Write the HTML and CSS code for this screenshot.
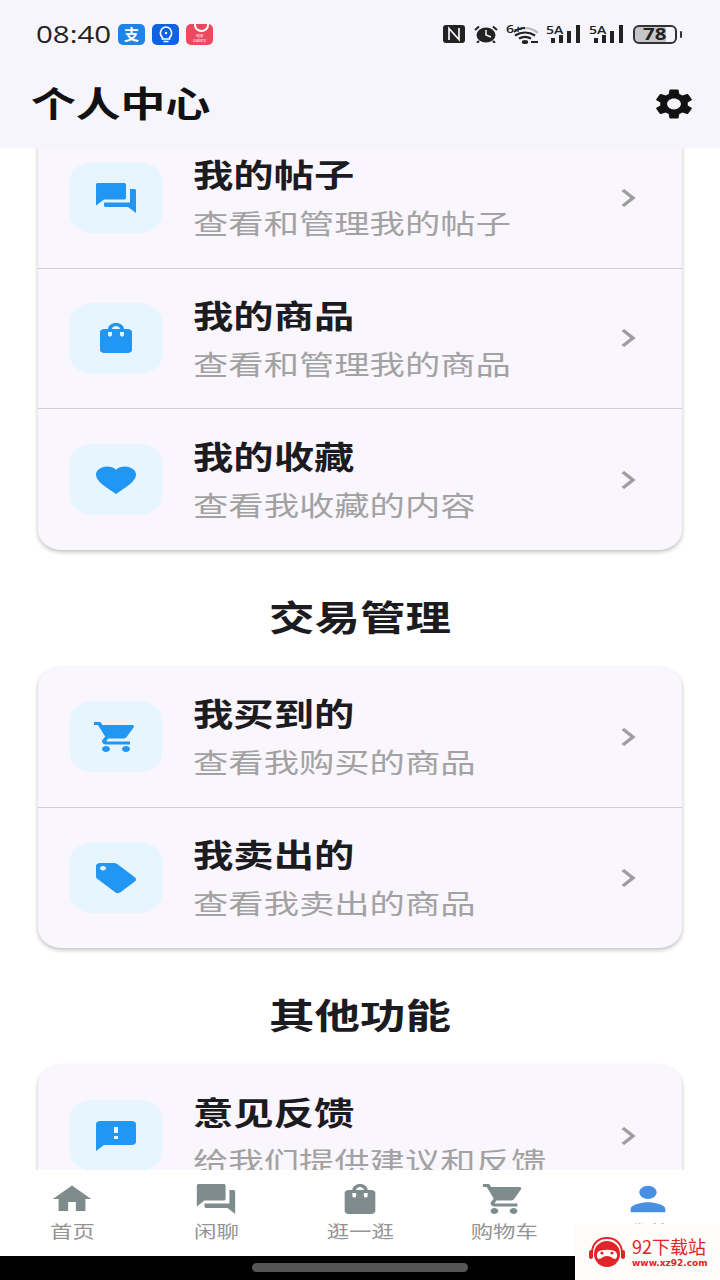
FILE: index.html
```html
<!DOCTYPE html>
<html lang="zh-CN">
<head>
    <meta charset="UTF-8">
    <meta name="viewport" content="width=device-width, initial-scale=1.0">
    <title>个人中心</title>
    <link rel="stylesheet" href="styles.css">
</head>
<body>
    <svg class="sprites" width="0" height="0">
        <symbol id="i-forum" viewBox="0 0 24 24" preserveAspectRatio="none"><path d="M21 6h-2v9H6v2c0 .55.45 1 1 1h11l4 4V7c0-.55-.45-1-1-1zm-4 6V3c0-.55-.45-1-1-1H3c-.55 0-1 .45-1 1v14l4-4h10c.55 0 1-.45 1-1z"/></symbol>
        <symbol id="i-bag" viewBox="0 0 24 24" preserveAspectRatio="none"><path d="M18 6h-2c0-2.21-1.79-4-4-4S8 3.79 8 6H6c-1.1 0-2 .9-2 2v12c0 1.1.9 2 2 2h12c1.1 0 2-.9 2-2V8c0-1.1-.9-2-2-2zm-8 4c0 .55-.45 1-1 1s-1-.45-1-1V8h2v2zm2-6c1.1 0 2 .9 2 2h-4c0-1.1.9-2 2-2zm4 6c0 .55-.45 1-1 1s-1-.45-1-1V8h2v2z"/></symbol>
        <symbol id="i-heart" viewBox="0 0 24 24" preserveAspectRatio="none"><path d="M12 21.35l-1.45-1.32C5.4 15.36 2 12.28 2 8.5 2 5.42 4.42 3 7.5 3c1.74 0 3.41.81 4.5 2.09C13.09 3.81 14.76 3 16.5 3 19.58 3 22 5.42 22 8.5c0 3.78-3.4 6.86-8.55 11.54L12 21.35z"/></symbol>
        <symbol id="i-cart" viewBox="0 0 24 24" preserveAspectRatio="none"><path d="M7 18c-1.1 0-1.99.9-1.99 2S5.9 22 7 22s2-.9 2-2-.9-2-2-2zM1 2v2h2l3.6 7.59-1.35 2.45c-.16.28-.25.61-.25.96 0 1.1.9 2 2 2h12v-2H7.42c-.14 0-.25-.11-.25-.25l.03-.12.9-1.63h7.45c.75 0 1.41-.41 1.75-1.03l3.58-6.49c.08-.14.12-.31.12-.48 0-.55-.45-1-1-1H5.21l-.94-2H1zm16 16c-1.1 0-1.99.9-1.99 2s.89 2 1.99 2 2-.9 2-2-.9-2-2-2z"/></symbol>
        <symbol id="i-tag" viewBox="0 0 24 24" preserveAspectRatio="none"><path d="M21.41 11.58l-9-9C12.05 2.22 11.55 2 11 2H4c-1.1 0-2 .9-2 2v7c0 .55.22 1.05.59 1.42l9 9c.36.36.86.58 1.41.58.55 0 1.05-.22 1.41-.59l7-7c.37-.36.59-.86.59-1.41 0-.55-.23-1.06-.59-1.42zM5.5 7C4.67 7 4 6.33 4 5.5S4.67 4 5.5 4 7 4.67 7 5.5 6.33 7 5.5 7z"/></symbol>
        <symbol id="i-feedback" viewBox="0 0 24 24" preserveAspectRatio="none"><path d="M20 2H4c-1.1 0-1.99.9-1.99 2L2 22l4-4h14c1.1 0 2-.9 2-2V4c0-1.1-.9-2-2-2zm-7 12h-2v-2h2v2zm0-4h-2V6h2v4z"/></symbol>
        <symbol id="i-chevron" viewBox="0 0 24 24" preserveAspectRatio="none"><path d="M10 6L8.59 7.41 13.17 12l-4.58 4.59L10 18l6-6z"/></symbol>
        <symbol id="i-home" viewBox="0 0 24 24" preserveAspectRatio="none"><path d="M10 20v-6h4v6h5v-8h3L12 3 2 12h3v8z"/></symbol>
        <symbol id="i-person" viewBox="0 0 24 24" preserveAspectRatio="none"><path d="M12 12c2.21 0 4-1.79 4-4s-1.79-4-4-4-4 1.79-4 4 1.79 4 4 4zm0 2c-2.67 0-8 1.34-8 4v2h16v-2c0-2.66-5.33-4-8-4z"/></symbol>
        <symbol id="i-gear" viewBox="0 0 24 24" preserveAspectRatio="none"><path d="M19.14 12.94c.04-.3.06-.61.06-.94 0-.32-.02-.64-.07-.94l2.03-1.58c.18-.14.23-.41.12-.61l-1.92-3.32c-.12-.22-.37-.29-.59-.22l-2.39.96c-.5-.38-1.03-.7-1.62-.94l-.36-2.54c-.04-.24-.24-.41-.48-.41h-3.84c-.24 0-.43.17-.47.41l-.36 2.54c-.59.24-1.13.57-1.62.94l-2.39-.96c-.22-.08-.47 0-.59.22L2.74 8.87c-.12.21-.08.47.12.61l2.03 1.58c-.05.3-.09.63-.09.94s.02.64.07.94l-2.03 1.58c-.18.14-.23.41-.12.61l1.92 3.32c.12.22.37.29.59.22l2.39-.96c.5.38 1.03.7 1.62.94l.36 2.54c.05.24.24.41.48.41h3.84c.24 0 .44-.17.47-.41l.36-2.54c.59-.24 1.13-.56 1.62-.94l2.39.96c.22.08.47 0 .59-.22l1.92-3.32c.12-.22.07-.47-.12-.61l-2.01-1.58zM12 15.6c-1.98 0-3.6-1.62-3.6-3.6s1.62-3.6 3.6-3.6 3.6 1.62 3.6 3.6-1.62 3.6-3.6 3.6z"/></symbol>
    </svg>

    <header class="top">
        <div class="status-bar">
            <div class="status-left">
                <span class="clock"><span class="wide">08:40</span></span>
                <span class="app-tile alipay">支</span>
                <span class="app-tile bulb">
                    <svg viewBox="0 0 26 20" width="26" height="20"><path d="M13 3a6 6 0 0 0-3.6 10.4V15h7.2v-1.6A6 6 0 0 0 13 3z" fill="none" stroke="#fff" stroke-width="1.6"/><path d="M10.5 17.5h5" stroke="#fff" stroke-width="1.6"/><circle cx="13" cy="9" r="1.2" fill="#fff"/></svg>
                </span>
                <span class="app-tile gallery"><span class="gallery-text">App<br>Gallery</span></span>
            </div>
            <div class="status-right">
                <svg class="st-nfc" viewBox="0 0 22 18" width="22" height="18">
                    <rect width="22" height="18" rx="3" fill="#222"/>
                    <path d="M6 15V3.500l10 11V3" fill="none" stroke="#f5f5fb" stroke-width="1.700"/>
                </svg>
                <svg class="st-alarm" viewBox="0 0 24 18" width="24" height="18">
                    <ellipse cx="12" cy="10" rx="9.500" ry="7.600" fill="#222"/>
                    <path d="M12 5v5l5 2" fill="none" stroke="#f5f5fb" stroke-width="1.500"/>
                    <path d="M1 5l4-3.500M23 5l-4-3.500M5 16l-2 2M19 16l2 2" stroke="#222" stroke-width="2"/>
                </svg>
                <span class="st-wifi">
                    <span class="st-small"><span class="wide">6+</span></span>
                    <svg viewBox="0 0 32 20" width="32" height="20">
                        <path d="M8 8C11 5.500 15 4 19 4" fill="none" stroke="#222" stroke-width="2.200"/>
                        <path d="M19 4c5 0 9 1.500 13 5" fill="none" stroke="#bbb" stroke-width="2.200"/>
                        <path d="M9 11.500c6-4 14-4 20 0" fill="none" stroke="#222" stroke-width="2.200"/>
                        <path d="M13 14.500c3.500-2 8.500-2 12 0" fill="none" stroke="#222" stroke-width="2.200"/>
                        <ellipse cx="19" cy="18" rx="3.200" ry="2" fill="#222"/>
                        <path d="M25 18h7" stroke="#222" stroke-width="2"/>
                    </svg>
                </span>
                <span class="st-signal">
                    <span class="st-small"><span class="wide">5A</span></span>
                    <svg viewBox="0 0 35 18" width="35" height="18"><path d="M5 13h4v5H5zM13 10h4v8h-4zM21 6h4v12h-4zM30 0h4v18h-4z" fill="#222"/></svg>
                </span>
                <span class="st-signal">
                    <span class="st-small"><span class="wide">5A</span></span>
                    <svg viewBox="0 0 35 18" width="35" height="18"><path d="M5 13h4v5H5zM13 10h4v8h-4zM21 6h4v12h-4zM30 0h4v18h-4z" fill="#222"/></svg>
                </span>
                <span class="battery"><span class="wide">78</span></span>
                <span class="battery-nub"></span>
            </div>
        </div>
        <div class="app-bar">
            <h1 class="page-title"><span class="wide">个人中心</span></h1>
            <svg class="gear"><use href="#i-gear"/></svg>
        </div>
    </header>

    <main class="content">
        <div class="scroll">
            <section class="card">
                <div class="row">
                    <div class="tile"><svg class="ico"><use href="#i-forum"/></svg></div>
                    <div class="row-text">
                        <div class="row-title"><span class="wide">我的帖子</span></div>
                        <div class="row-sub"><span class="wide">查看和管理我的帖子</span></div>
                    </div>
                    <svg class="chevron"><use href="#i-chevron"/></svg>
                </div>
                <div class="row">
                    <div class="tile"><svg class="ico"><use href="#i-bag"/></svg></div>
                    <div class="row-text">
                        <div class="row-title"><span class="wide">我的商品</span></div>
                        <div class="row-sub"><span class="wide">查看和管理我的商品</span></div>
                    </div>
                    <svg class="chevron"><use href="#i-chevron"/></svg>
                </div>
                <div class="row">
                    <div class="tile"><svg class="ico"><use href="#i-heart"/></svg></div>
                    <div class="row-text">
                        <div class="row-title"><span class="wide">我的收藏</span></div>
                        <div class="row-sub"><span class="wide">查看我收藏的内容</span></div>
                    </div>
                    <svg class="chevron"><use href="#i-chevron"/></svg>
                </div>
            </section>

            <h2 class="section-title"><span class="wide">交易管理</span></h2>
            <section class="card">
                <div class="row">
                    <div class="tile"><svg class="ico"><use href="#i-cart"/></svg></div>
                    <div class="row-text">
                        <div class="row-title"><span class="wide">我买到的</span></div>
                        <div class="row-sub"><span class="wide">查看我购买的商品</span></div>
                    </div>
                    <svg class="chevron"><use href="#i-chevron"/></svg>
                </div>
                <div class="row">
                    <div class="tile"><svg class="ico"><use href="#i-tag"/></svg></div>
                    <div class="row-text">
                        <div class="row-title"><span class="wide">我卖出的</span></div>
                        <div class="row-sub"><span class="wide">查看我卖出的商品</span></div>
                    </div>
                    <svg class="chevron"><use href="#i-chevron"/></svg>
                </div>
            </section>

            <h2 class="section-title"><span class="wide">其他功能</span></h2>
            <section class="card">
                <div class="row">
                    <div class="tile"><svg class="ico"><use href="#i-feedback"/></svg></div>
                    <div class="row-text">
                        <div class="row-title"><span class="wide">意见反馈</span></div>
                        <div class="row-sub"><span class="wide">给我们提供建议和反馈</span></div>
                    </div>
                    <svg class="chevron"><use href="#i-chevron"/></svg>
                </div>
            </section>
        </div>
    </main>

    <nav class="tabs">
        <div class="tab"><svg class="tab-ico"><use href="#i-home"/></svg><span class="tab-label"><span class="wide">首页</span></span></div>
        <div class="tab"><svg class="tab-ico"><use href="#i-forum"/></svg><span class="tab-label"><span class="wide">闲聊</span></span></div>
        <div class="tab"><svg class="tab-ico"><use href="#i-bag"/></svg><span class="tab-label"><span class="wide">逛一逛</span></span></div>
        <div class="tab"><svg class="tab-ico"><use href="#i-cart"/></svg><span class="tab-label"><span class="wide">购物车</span></span></div>
        <div class="tab active"><svg class="tab-ico"><use href="#i-person"/></svg><span class="tab-label"><span class="wide">我的</span></span></div>
    </nav>
    <div class="gesture-bar"><span class="gesture-pill"></span></div>

    <div class="watermark">
        <svg class="wm-logo" viewBox="0 0 36 32" width="36" height="32">
            <path d="M3 17C3 7 10 2 18 2s15 5 15 15" fill="none" stroke="#e0242a" stroke-width="2"/>
            <ellipse cx="18" cy="18" rx="13" ry="13" fill="#e0242a"/>
            <rect x="0" y="14" width="4" height="9" rx="2" fill="#e0242a"/>
            <rect x="32" y="14" width="4" height="9" rx="2" fill="#e0242a"/>
            <path d="M9 16c3-3 15-3 18 0 2 3 1 7-1 7-3 0-3-3-8-3s-5 3-8 3c-2 0-3-4-1-7z" fill="#fff"/>
            <circle cx="13" cy="17" r="1.600" fill="#e0242a"/>
            <circle cx="23" cy="17" r="1.600" fill="#e0242a"/>
        </svg>
        <div class="wm-text">
            <div class="wm-name">92下载站</div>
            <div class="wm-url">www.xz92.com</div>
        </div>
    </div>
</body>
</html>
```

FILE: styles.css
```css
* {
    box-sizing: border-box;
}

body {
    margin: 0;
    width: 720px;
    height: 1280px;
    overflow: hidden;
    position: relative;
    display: flex;
    flex-direction: column;
    background-color: #fff;
    color: #1c1b1f;
    font-family: "Noto Sans CJK SC", "Noto Sans", sans-serif;
}

.sprites {
    position: absolute;
}

/* the capture is stretched sideways, so text gets widened too */
.wide {
    display: inline-block;
    white-space: nowrap;
    transform: scaleX(1.28);
    transform-origin: left center;
}

/* header */
.top {
    height: 148px;
    flex: none;
    background-color: #f5f5fb;
}

.status-bar {
    height: 68px;
    display: flex;
    align-items: center;
    justify-content: space-between;
    padding: 0 43px 0 36px;
}

.status-left {
    display: flex;
    align-items: center;
}

.clock {
    width: 82px;
    font-family: "Open Sans", sans-serif;
    font-size: 23px;
    font-weight: 500;
    color: #222;
    line-height: 30px;
}

.app-tile {
    width: 27px;
    height: 21px;
    margin-right: 7px;
    border-radius: 5px;
    display: flex;
    align-items: center;
    justify-content: center;
    color: #fff;
    overflow: hidden;
}

.alipay {
    background-color: #1f84e8;
    font-size: 15px;
    font-weight: 700;
    line-height: 20px;
}

.bulb {
    background-color: #0f62e0;
}

.gallery {
    position: relative;
    background-color: #ee4860;
    align-items: flex-end;
}

/* bag handle peeking in at the top of the tile */
.gallery::before {
    content: "";
    position: absolute;
    top: -6px;
    left: 8px;
    width: 11px;
    height: 10px;
    border: 2px solid #fff;
    border-radius: 50%;
}

.gallery-text {
    font-size: 4px;
    line-height: 5px;
    margin-bottom: 2px;
    text-align: center;
    white-space: nowrap;
}

.status-right {
    display: flex;
    align-items: center;
}

.st-nfc {
    margin-right: 9px;
}

.st-alarm {
    margin-right: 8px;
}

.st-wifi {
    position: relative;
    margin-right: 8px;
    display: flex;
}

.st-signal {
    position: relative;
    margin-right: 8px;
    display: flex;
}

.st-small {
    position: absolute;
    top: -1px;
    left: 0;
    font-size: 11px;
    line-height: 12px;
    font-family: "Open Sans", sans-serif;
    font-weight: 600;
    color: #222;
}

.battery {
    width: 44px;
    height: 19px;
    margin-left: 1px;
    border: 2px solid #333;
    border-radius: 6px;
    background: linear-gradient(to right, #c6c6c8 78%, #f5f5fb 78%);
    font-family: "Open Sans", sans-serif;
    font-size: 16px;
    font-weight: 700;
    line-height: 15px;
    color: #222;
    padding-left: 8px;
}

.battery-nub {
    width: 2px;
    height: 7px;
    margin-left: 3px;
    margin-right: -5px;
    background-color: #333;
    border-radius: 1px;
}

.app-bar {
    height: 72px;
    display: flex;
    align-items: center;
    justify-content: space-between;
    padding: 0 23px 0 31px;
}

.page-title {
    margin: 0 0 4px;
    font-size: 35px;
    font-weight: 700;
    line-height: 48px;
    color: #111;
}

.gear {
    width: 46px;
    height: 36px;
    fill: #111;
}

/* list */
.content {
    flex: 1;
    min-height: 0;
    overflow: hidden;
}

.scroll {
    margin-top: -20px;
    padding: 0 38px;
}

.card {
    background-color: #faf6fd;
    border-radius: 24px / 20px;
    box-shadow: 0 2px 4px rgba(0, 0, 0, 0.25);
}

.row {
    height: 140.67px;
    display: flex;
    align-items: center;
    padding: 0 32px;
    border-bottom: 1px solid #d2d0d5;
}

.row:last-child {
    border-bottom: none;
}

.tile {
    width: 92px;
    height: 71px;
    flex: none;
    display: flex;
    align-items: center;
    justify-content: center;
    background-color: #e6f5ff;
    border-radius: 24px / 18px;
}

.ico {
    width: 48px;
    height: 36px;
    fill: #2196f3;
}

.row-text {
    flex: 1;
    margin-left: 31px;
}

.row-title {
    font-size: 31.5px;
    font-weight: 700;
    line-height: 46px;
    color: #1c1b1f;
}

.row-sub {
    margin-top: 3px;
    font-size: 27.6px;
    line-height: 46px;
    color: #a2a2a2;
}

.chevron {
    width: 46px;
    height: 36px;
    flex: none;
    margin-right: -1px;
    fill: #9e9e9e;
}

.section-title {
    margin: 41px 0 26px;
    font-size: 35.5px;
    font-weight: 700;
    line-height: 50px;
    text-align: center;
    color: #1c1b1f;
}

.section-title .wide {
    transform-origin: center;
}

/* bottom tabs */
.tabs {
    height: 86px;
    flex: none;
    display: flex;
    background-color: #fff;
}

.tab {
    flex: 1;
    display: flex;
    flex-direction: column;
    align-items: center;
    padding-top: 11px;
    color: #949494;
}

.tab-ico {
    width: 46px;
    height: 36px;
    fill: #7f8c8d;
}

.tab-label {
    font-size: 17.5px;
    line-height: 24px;
    margin-top: 2px;
}

.tab-label .wide {
    transform-origin: center;
}

.tab.active {
    color: #4a90e2;
}

.tab.active .tab-ico {
    width: 52px;
    height: 40px;
    margin: -2px 0;
    fill: #4a90e2;
}

.gesture-bar {
    height: 24px;
    flex: none;
    display: flex;
    justify-content: center;
    padding-top: 7px;
    background-color: #000;
}

.gesture-pill {
    width: 216px;
    height: 9px;
    border-radius: 5px;
    background-color: #555;
}

/* site stamp in the corner */
.watermark {
    position: absolute;
    right: 0;
    bottom: 0;
    width: 145px;
    height: 56px;
    display: flex;
    align-items: center;
    padding-left: 14px;
    background-color: #fdfcf9;
}

.wm-logo {
    flex: none;
}

.wm-text {
    margin-left: 7px;
    color: #e0242a;
}

.wm-name {
    font-size: 18px;
    line-height: 21px;
}

.wm-url {
    font-family: "DejaVu Sans", sans-serif;
    font-size: 9px;
    font-weight: 700;
    line-height: 12px;
    white-space: nowrap;
}
```
